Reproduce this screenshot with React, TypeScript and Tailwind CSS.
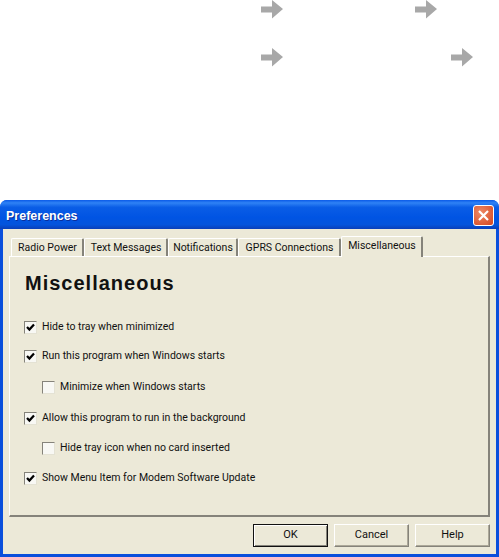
const font = { fontFamily: 'Roboto, "Liberation Sans", Arial, sans-serif' };

function Arrow() {
  return (
    <svg width="22" height="19" viewBox="0 0 22 19" className="block blur-[0.6px]">
      <path d="M0 6.5H11V0L22 9L11 18.5V12.5H0Z" fill="#a8a8a8" />
    </svg>
  );
}

function Check({ checked, label, indent, top }: { checked?: boolean; label: string; indent?: boolean; top: string }) {
  return (
    <div className={`flex items-center h-[14px] gap-[5px] ${top} ${indent ? "pl-[18px]" : ""}`}>
      <div className="w-[13px] h-[13px] bg-[#f8f8f4] border border-[#85837a] border-r-[#e4e2d4] border-b-[#e4e2d4] flex items-center justify-center shrink-0">
        {checked && (
          <svg width="9" height="9" viewBox="0 0 9 9">
            <path d="M1 4L3.4 6.6L8 1.4" fill="none" stroke="#000" strokeWidth="2.2" />
          </svg>
        )}
      </div>
      <span className="text-[10.5px] text-[#111] whitespace-nowrap">{label}</span>
    </div>
  );
}

function Tab({ label, active, w }: { label: string; active?: boolean; w: string }) {
  return (
    <div
      className={`${w} flex items-center justify-center pl-[1px] text-[10.5px] text-[#111] whitespace-nowrap bg-[#ece9d8] border-t border-l border-white border-r-2 border-r-[#85837a] rounded-t-[2px] ${
        active ? "h-[21px] -mb-[1px] relative z-10 pb-[3px]" : "h-[18px]"
      }`}
    >
      {label}
    </div>
  );
}

function Btn({ label, primary }: { label: string; primary?: boolean }) {
  return (
    <div
      className={`w-[75px] h-[23px] flex items-center justify-center text-[11px] text-[#111] bg-[#ece9d8] border ${
        primary
          ? "border-[#111] shadow-[inset_1px_1px_0_#fff,inset_-1px_-1px_0_#85837a]"
          : "border-t-white border-l-white border-r-[#85837a] border-b-[#85837a] shadow-[inset_-1px_-1px_0_#aca899]"
      }`}
    >
      {label}
    </div>
  );
}

export default function App() {
  return (
    <div className="w-[499px] h-[557px] bg-white overflow-hidden flex flex-col" style={font}>
      <div className="h-[200px] shrink-0 flex flex-col gap-[29px] pl-[261px]">
        <div className="flex gap-[132px]">
          <Arrow />
          <Arrow />
        </div>
        <div className="flex gap-[168px]">
          <Arrow />
          <Arrow />
        </div>
      </div>

      <div className="flex-1 flex flex-col rounded-t-[7px] overflow-hidden bg-[#0a4fdc]">
        <div className="h-[29px] shrink-0 flex items-center justify-between pl-[6px] pr-[5px] bg-[linear-gradient(180deg,#0a5ae8_0%,#2f82f5_10%,#0a5de6_25%,#0054e3_60%,#0454dc_85%,#0a3fb8_100%)]">
          <span className="mt-[3px] text-white font-bold text-[12.5px] [text-shadow:1px_1px_0_#0a2f9c]" style={{ fontFamily: '"Liberation Sans", sans-serif' }}>
            Preferences
          </span>
          <div className="mt-[2px] w-[21px] h-[21px] rounded-[3px] border border-white bg-[radial-gradient(circle_at_35%_35%,#ee8a66,#d5451f)] flex items-center justify-center">
            <svg width="13" height="13" viewBox="0 0 13 13">
              <path d="M2 2L11 11M11 2L2 11" stroke="#fff" strokeWidth="2.2" fill="none" />
            </svg>
          </div>
        </div>

        <div className="flex-1 mx-[3px] mb-[3px] bg-[#ece9d8] flex flex-col pl-[6px] pr-[6px]">
          <div className="h-[27px] shrink-0 flex items-end pl-[2px]">
            <Tab label="Radio Power" w="w-[73px]" />
            <Tab label="Text Messages" w="w-[84px]" />
            <Tab label="Notifications" w="w-[70px]" />
            <Tab label="GPRS Connections" w="w-[103px]" />
            <Tab label="Miscellaneous" w="w-[82px]" active />
          </div>
          <div className="h-[261px] shrink-0 border-l border-t border-white border-r-2 border-b-2 border-r-[#85837a] border-b-[#85837a] pl-[15px] pt-[14px]">
            <div className="text-[20px] font-bold leading-[24px] tracking-[1px] text-[#111]" style={{ fontFamily: '"Liberation Sans", sans-serif' }}>Miscellaneous</div>
            <div className="mt-[25px] -ml-[1px] flex flex-col">
              <Check checked label="Hide to tray when minimized" top="mt-0" />
              <Check checked label="Run this program when Windows starts" top="mt-[15px]" />
              <Check indent label="Minimize when Windows starts" top="mt-[17px]" />
              <Check checked label="Allow this program to run in the background" top="mt-[17px]" />
              <Check indent label="Hide tray icon when no card inserted" top="mt-[16px]" />
              <Check checked label="Show Menu Item for Modem Software Update" top="mt-[16px]" />
            </div>
          </div>
          <div className="flex justify-end gap-[6px] pt-[7px]">
            <Btn label="OK" primary />
            <Btn label="Cancel" />
            <Btn label="Help" />
          </div>
        </div>
      </div>
    </div>
  );
}
